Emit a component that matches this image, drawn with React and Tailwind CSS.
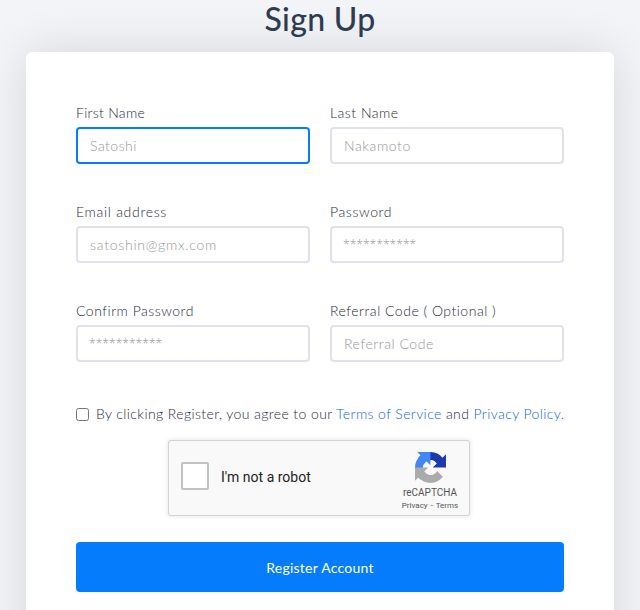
import React from 'react';

function Field({ label, placeholder, labelTracking, textTracking, focused, stars }) {
  return (
    <label className="block">
      <span className={`block h-[26px] pt-px text-[14px] leading-[22px] whitespace-nowrap ${labelTracking}`}>{label}</span>
      <input
        type="text"
        placeholder={placeholder}
        className={`block h-[37px] w-full rounded-[4px] border-2 bg-white font-light outline-none placeholder:text-[#979797] ${stars ? 'px-[11px] font-["Open_Sans",sans-serif] text-[12px]' : 'px-[12px] pb-px text-[14px]'} ${textTracking} ${focused ? 'border-[#057cfc]' : 'border-[#dfe2ee]'}`}
      />
    </label>
  );
}

function RecaptchaLogo() {
  return (
    <svg viewBox="0 0 64 64" className="ml-px size-[31px]">
      <path fill="#1c3aa9" d="M64 31.955l-.033-1.37V4.687l-7.16 7.16C50.948 4.674 42.033.093 32.05.093c-10.389 0-19.622 4.96-25.458 12.64l11.736 11.86a15.55 15.55 0 0 1 4.754-5.334c2.05-1.6 4.952-2.906 8.968-2.906.485 0 .86.057 1.135.163 4.976.393 9.288 3.139 11.827 7.124l-8.307 8.307L64 31.953" />
      <path fill="#4285f4" d="M31.862.094l-1.37.033H4.594l7.16 7.16C4.58 13.147 0 22.06 0 32.046c0 10.388 4.96 19.622 12.64 25.458L24.5 45.768a15.55 15.55 0 0 1-5.334-4.754c-1.6-2.05-2.906-4.952-2.906-8.968 0-.486.057-.86.163-1.135.393-4.977 3.139-9.289 7.124-11.827l8.307 8.307L31.86.095" />
      <path fill="#ababab" d="M.001 32.045l.033 1.37v25.898l7.16-7.16c5.86 7.173 14.774 11.754 24.76 11.754 10.388 0 19.622-4.96 25.458-12.64l-11.736-11.86a15.55 15.55 0 0 1-4.754 5.334c-2.05 1.6-4.952 2.906-8.968 2.906-.485 0-.86-.057-1.135-.163-4.977-.393-9.289-3.139-11.827-7.124l8.307-8.307L0 32.047" />
    </svg>
  );
}

export default function App() {
  return (
    <div className="h-[610px] w-[640px] overflow-hidden bg-[#f3f4f8] font-['Lato',sans-serif] text-[#262b3a]">
      <h1 className="h-[52px] text-center text-[32px] leading-[38px] font-medium tracking-[0.3px] text-[#2e3b52]">Sign Up</h1>
      <main className="mx-[26px] h-[620px] rounded-[6px] bg-white px-[50px] pt-[49px] shadow-[0_0_50px_rgba(0,0,0,0.12)]">
        <form>
          <div className="grid grid-cols-2 gap-x-[20px] gap-y-[36px] font-light">
            <Field label="First Name" placeholder="Satoshi" labelTracking="tracking-[0.3px]" textTracking="tracking-[0.5px]" focused />
            <Field label="Last Name" placeholder="Nakamoto" labelTracking="tracking-[0.5px]" textTracking="tracking-[0.6px]" />
            <Field label="Email address" placeholder="satoshin@gmx.com" labelTracking="tracking-[0.7px]" textTracking="tracking-[0.75px]" />
            <Field label="Password" placeholder="***********" labelTracking="tracking-[0.6px]" textTracking="tracking-[0.05px]" stars />
            <Field label="Confirm Password" placeholder="***********" labelTracking="tracking-[0.5px]" textTracking="tracking-[0.05px]" stars />
            <Field label="Referral Code ( Optional )" placeholder="Referral Code" labelTracking="tracking-[0.5px]" textTracking="tracking-[0.55px]" />
          </div>

          <label className="mt-[40px] flex h-[24px] items-center whitespace-nowrap">
            <input type="checkbox" className="size-[13px] shrink-0" />
            <span className="ml-[7px] text-[14px] leading-[22px] font-light tracking-[0.4px]">
              By clicking Register, you agree to our <a className="text-[#0b64f0]">Terms of Service</a> and <a className="text-[#0b64f0]">Privacy Policy.</a>
            </span>
          </label>

          <div className="mt-[14px] ml-[92px] flex h-[76px] w-[302px] items-center rounded-[3px] border border-[#d3d3d3] bg-[#f9f9f9] font-['Roboto',sans-serif] text-black shadow-[0_0_4px_1px_rgba(0,0,0,0.08)]">
            <div className="mt-[-4px] ml-[12px] size-[28px] rounded-[2px] border-2 border-[#c1c1c1] bg-white" />
            <span className="mt-[-2px] ml-[12px] text-[14px] leading-[17px] text-[#222]">I'm not a robot</span>
            <div className="mr-[8px] ml-auto flex h-full w-[62px] flex-col items-center pt-[11px] text-[#555]">
              <RecaptchaLogo />
              <span className="mt-[4px] text-[10px] leading-[11px]">reCAPTCHA</span>
              <span className="mt-[3px] text-[8px] leading-[9px] whitespace-nowrap">Privacy <span className="px-px">-</span> Terms</span>
            </div>
          </div>

          <button type="button" className="mt-[26px] block h-[50px] w-full rounded-[4px] bg-[#057cfc] text-[14px] tracking-[0.25px] text-white">
            Register Account
          </button>
        </form>
      </main>
    </div>
  );
}
